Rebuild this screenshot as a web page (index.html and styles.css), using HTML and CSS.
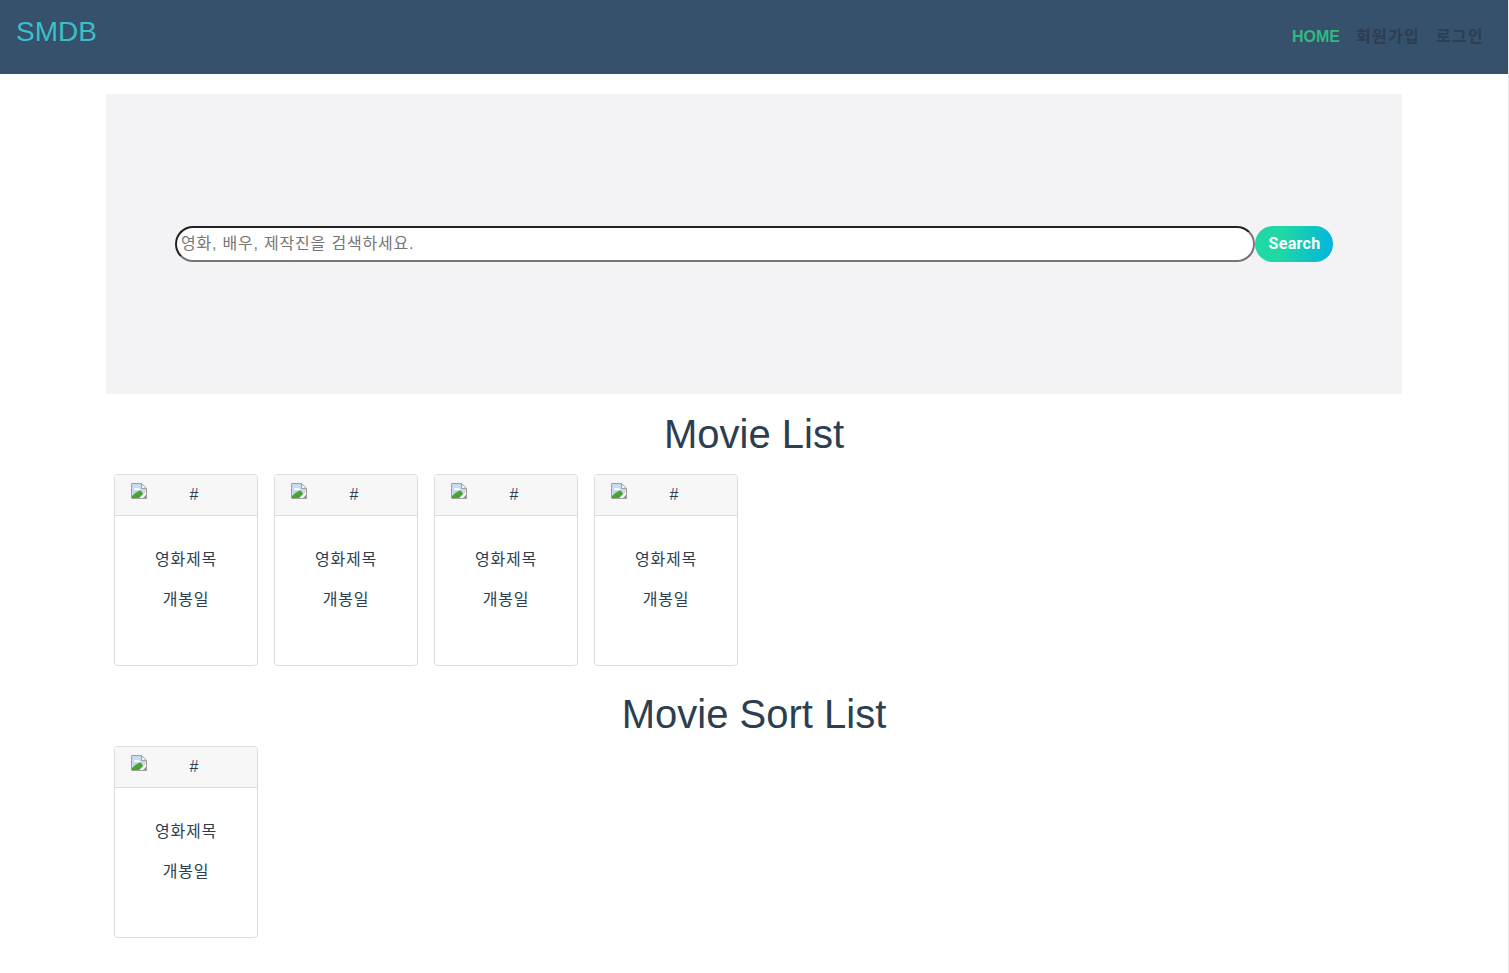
FILE: index.html
```html
<!DOCTYPE html>
<html lang="ko">
<head>
    <meta charset="UTF-8">
    <meta name="viewport" content="width=device-width, initial-scale=1.0">
    <title>SMDB</title>
    <link rel="stylesheet" href="styles.css">
</head>
<body>
    <svg class="icon-defs" width="0" height="0">
        <symbol id="broken-img" viewBox="0 0 16 16">
            <path d="M.5.5h10l5 5v10H.5z" fill="#c6daf4" stroke="#a0a0a0"/>
            <path d="M10.5.5v5h5z" fill="#f4f4f4" stroke="#a0a0a0"/>
            <path d="M3 6.500c0-1.500 2.500-2.500 4-1 1.500-.3 2.500.3 2.500 1.500H3z" fill="#fff"/>
            <path d="M1 15v-2C4 10 7 7.500 10 7.500l2 3.500-4 4z" fill="#4ea32f"/>
            <path d="M9 15l6-6v2l-2 4z" fill="#fff"/>
            <path d="M12 15l3-3v3z" fill="#8f8f8f"/>
        </symbol>
    </svg>

    <header class="navbar">
        <a class="brand" href="#">SMDB</a>
        <nav class="nav-links">
            <a class="nav-link active" href="#">HOME</a>
            <a class="nav-link hangul" href="#">회원가입</a>
            <a class="nav-link hangul" href="#">로그인</a>
        </nav>
    </header>

    <main class="container">
        <section class="hero">
            <form class="search-form">
                <input class="search-input" type="text" placeholder="영화, 배우, 제작진을 검색하세요.">
                <button class="search-btn" type="button">Search</button>
            </form>
        </section>

        <h1 class="section-title">Movie List</h1>
        <div class="card-row">
            <div class="card">
                <div class="card-header">
                    <svg class="broken-img" width="16" height="16"><use href="#broken-img"/></svg>
                    <a class="card-link" href="#">#</a>
                </div>
                <div class="card-body">
                    <p>영화제목</p>
                    <p>개봉일</p>
                </div>
            </div>
            <div class="card">
                <div class="card-header">
                    <svg class="broken-img" width="16" height="16"><use href="#broken-img"/></svg>
                    <a class="card-link" href="#">#</a>
                </div>
                <div class="card-body">
                    <p>영화제목</p>
                    <p>개봉일</p>
                </div>
            </div>
            <div class="card">
                <div class="card-header">
                    <svg class="broken-img" width="16" height="16"><use href="#broken-img"/></svg>
                    <a class="card-link" href="#">#</a>
                </div>
                <div class="card-body">
                    <p>영화제목</p>
                    <p>개봉일</p>
                </div>
            </div>
            <div class="card">
                <div class="card-header">
                    <svg class="broken-img" width="16" height="16"><use href="#broken-img"/></svg>
                    <a class="card-link" href="#">#</a>
                </div>
                <div class="card-body">
                    <p>영화제목</p>
                    <p>개봉일</p>
                </div>
            </div>
        </div>

        <h1 class="section-title sort-title">Movie Sort List</h1>
        <div class="card-row">
            <div class="card">
                <div class="card-header">
                    <svg class="broken-img" width="16" height="16"><use href="#broken-img"/></svg>
                    <a class="card-link" href="#">#</a>
                </div>
                <div class="card-body">
                    <p>영화제목</p>
                    <p>개봉일</p>
                </div>
            </div>
        </div>
    </main>
</body>
</html>
```

FILE: styles.css
```css
body {
    margin: 0;
    font-family: "Liberation Sans", "Noto Sans CJK KR", sans-serif;
    font-size: 16px;
    color: #2c3e50;
    background-color: #fff;
    border-right: 1px solid #e6e6e6;
    height: 973px;
    overflow: hidden;
    box-sizing: border-box;
}

a {
    text-decoration: none;
}

.icon-defs {
    display: block;
}

.navbar {
    display: flex;
    justify-content: space-between;
    height: 74px;
    padding: 0 16px;
    background-color: #36516c;
}
.brand {
    margin-top: 15px;
    font-size: 28px;
    line-height: 34px;
    color: #3bbfc6;
}
.nav-links {
    display: flex;
    gap: 16px;
    margin-top: 28px;
    padding-right: 8px;
    line-height: 18px;
}
.nav-link {
    font-weight: bold;
    color: #2c3e50;
}
.nav-link.active {
    color: #33b880;
}
.hangul {
    letter-spacing: 1.28px;
}

.container {
    width: 1296px;
    margin: 0 auto;
    padding-top: 20px;
}

.hero {
    display: flex;
    align-items: center;
    justify-content: center;
    height: 300px;
    background-color: #f3f3f5;
}
.search-form {
    display: flex;
}
.search-input {
    width: 1080px;
    height: 36px;
    box-sizing: border-box;
    padding: 1px 4px;
    border: 2px inset #767676;
    border-radius: 18px;
    font-family: inherit;
    font-size: 16px;
    letter-spacing: 0.8px;
}
.search-btn {
    width: 78px;
    height: 36px;
    padding: 0 0 2px 1px;
    border: 0;
    border-radius: 18px;
    background: linear-gradient(100deg, #1fd8a4 35%, #00b4e0 100%);
    color: #fff;
    font-family: Roboto, sans-serif;
    font-size: 16px;
    font-weight: bold;
    letter-spacing: 0.3px;
}

.section-title {
    margin: 16px 0;
    font-size: 40px;
    font-weight: normal;
    line-height: 48px;
    text-align: center;
}
.sort-title {
    margin: 24px 0 8px;
}

.card-row {
    display: flex;
    gap: 16px;
    padding: 0 8px;
}
.card {
    width: 144px;
    height: 192px;
    box-sizing: border-box;
    border: 1px solid #dcdcdc;
    border-radius: 4px;
}
.card-header {
    display: flex;
    height: 41px;
    box-sizing: border-box;
    padding: 8px 16px;
    border-bottom: 1px solid #dcdcdc;
    border-radius: 3px 3px 0 0;
    background-color: #f7f7f7;
}
.broken-img {
    flex: none;
}
.card-link {
    margin: 3px 0 0 42.500px;
    line-height: 18px;
    color: #2c3e50;
}
.card-body {
    padding: 32px 0 0;
    text-align: center;
}
.card-body p {
    margin: 0 0 16px;
    line-height: 24px;
    letter-spacing: 0.8px;
}
```
